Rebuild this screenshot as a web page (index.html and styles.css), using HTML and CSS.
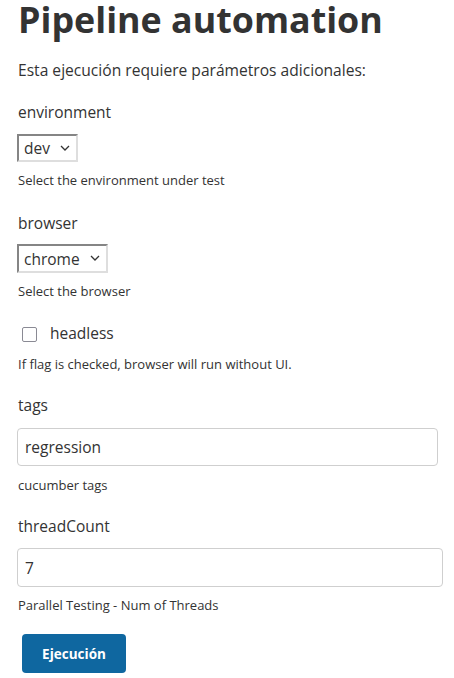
FILE: index.html
```html
<!DOCTYPE html>
<html lang="es">
<head>
<meta charset="utf-8">
<title>Pipeline automation</title>
<link rel="stylesheet" href="styles.css">
</head>
<body>
<form class="page">
  <h1 class="title">Pipeline automation</h1>
  <p class="intro">Esta ejecución requiere parámetros adicionales:</p>

  <label class="param-name param-env">environment</label>
  <span class="select-wrap select-env">
    <select class="select"><option>dev</option></select>
    <svg class="chevron" width="10" height="6" viewBox="0 0 10 6"><path d="M1 1l4 4 4-4" fill="none" stroke="#333" stroke-width="1.3"/></svg>
  </span>
  <p class="help help-env">Select the environment under test</p>

  <label class="param-name param-browser">browser</label>
  <span class="select-wrap select-browser">
    <select class="select"><option>chrome</option></select>
    <svg class="chevron" width="10" height="6" viewBox="0 0 10 6"><path d="M1 1l4 4 4-4" fill="none" stroke="#333" stroke-width="1.3"/></svg>
  </span>
  <p class="help help-browser">Select the browser</p>

  <label class="check-row">
    <span class="checkbox"></span>
    <span class="check-label">headless</span>
  </label>
  <p class="help help-headless">If flag is checked, browser will run without UI.</p>

  <label class="param-name param-tags">tags</label>
  <input class="text-input input-tags" type="text" value="regression">
  <p class="help help-tags">cucumber tags</p>

  <label class="param-name param-threads">threadCount</label>
  <input class="text-input input-threads" type="text" value="7">
  <p class="help help-threads">Parallel Testing - Num of Threads</p>

  <button class="submit" type="button">Ejecución</button>
</form>
</body>
</html>
```
FILE: styles.css
```css
html, body {
  margin: 0;
  padding: 0;
  background: #fff;
}

body {
  font-family: "Open Sans", "Noto Sans", sans-serif;
  color: #333;
}

.page {
  display: flex;
  flex-direction: column;
  align-items: flex-start;
  padding-left: 17px;
}

.title {
  margin: 0;
  font-size: 35.8px;
  line-height: 38px;
  font-weight: 700;
  color: #333;
  padding-left: 1px;
}

.intro {
  margin: 21px 0 0;
  font-size: 15.6px;
  line-height: 22px;
  padding-left: 1px;
}

.param-name {
  display: block;
  font-size: 15.5px;
  line-height: 22px;
  padding-left: 1px;
}

.param-env { margin-top: 20px; }
.param-browser { margin-top: 23px; }
.param-tags { margin-top: 21px; }
.param-threads { margin-top: 21px; }

.select-wrap {
  position: relative;
  display: block;
}

.select-env { margin-top: 11px; }
.select-browser { margin-top: 10px; }

.select {
  appearance: none;
  -webkit-appearance: none;
  display: block;
  box-sizing: border-box;
  height: 28px;
  margin: 0;
  padding: 0 24px 0 5px;
  font-family: "Open Sans", "Noto Sans", sans-serif;
  font-size: 15.5px;
  color: #333;
  background: #fff;
  border-style: solid;
  border-width: 2px;
  border-color: #858585 #dedede #dedede #858585;
  border-radius: 0;
}

.select-env .select { width: 61px; }
.select-browser .select { width: 91px; height: 29px; }

.chevron {
  position: absolute;
  right: 8px;
  top: 11px;
  pointer-events: none;
}

.help {
  margin: 9px 0 0;
  font-size: 13px;
  line-height: 18px;
  padding-left: 1px;
}

.help-headless { margin-top: 11px; }
.help-tags { margin-top: 10px; }

.check-row {
  display: flex;
  align-items: flex-start;
  margin-top: 22px;
  padding-left: 5px;
}

.checkbox {
  box-sizing: border-box;
  width: 15px;
  height: 15px;
  margin-top: 5px;
  border: 1.5px solid #8a8a94;
  border-radius: 2px;
  background: #fff;
}

.check-label {
  margin-left: 13px;
  font-size: 15.5px;
  line-height: 22px;
}

.text-input {
  box-sizing: border-box;
  margin: 0;
  padding: 0 7px;
  font-family: "Open Sans", "Noto Sans", sans-serif;
  font-size: 15.5px;
  color: #333;
  background: #fff;
  border: 1px solid #cfcfcf;
  border-radius: 4px;
  outline: none;
}

.input-tags {
  width: 421px;
  height: 38px;
  margin-top: 12px;
}

.input-threads {
  width: 426px;
  height: 39px;
  margin-top: 11px;
}

.submit {
  box-sizing: border-box;
  width: 104px;
  height: 39px;
  margin: 20px 0 0 5px;
  padding: 0;
  font-family: "Open Sans", "Noto Sans", sans-serif;
  font-size: 13.5px;
  font-weight: 700;
  color: #fff;
  background: #0f67a0;
  border: none;
  border-radius: 4px;
}
```
